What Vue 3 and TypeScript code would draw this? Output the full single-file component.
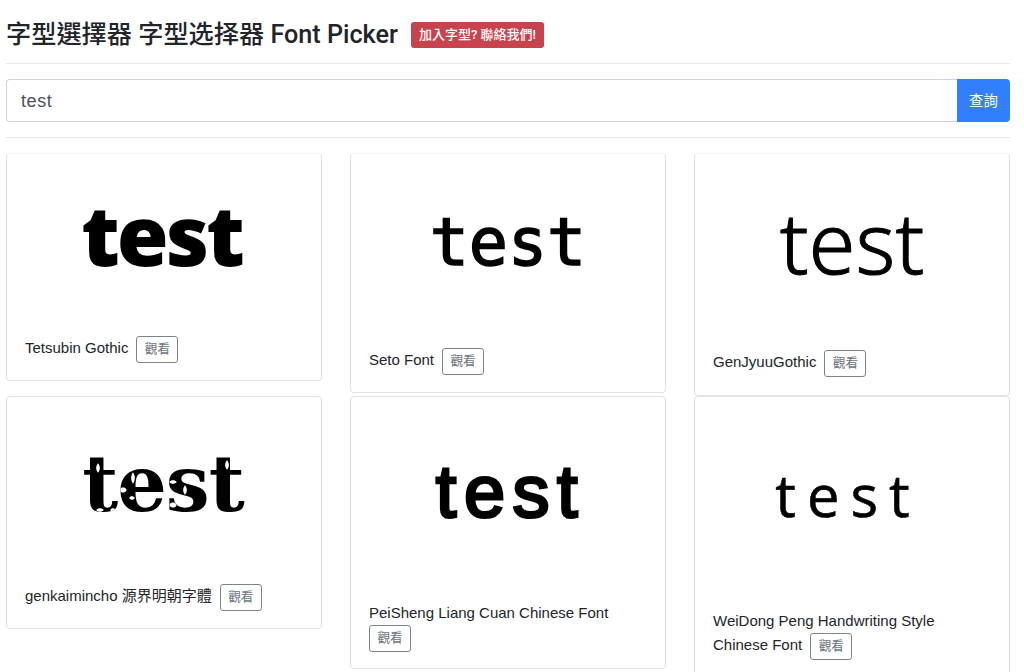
<template>
  <div class="page">
    <h3 class="title">
      <span>字型選擇器 字型选择器 Font Picker</span>
      <a class="badge">加入字型? 聯絡我們!</a>
    </h3>
    <hr class="rule" />

    <div class="search">
      <input v-model="query" class="search-input" type="text" />
      <button class="search-btn">查詢</button>
    </div>
    <hr class="rule rule-low" />

    <div class="columns">
      <div v-for="(column, i) in columns" :key="i" class="column">
        <div
          v-for="font in column"
          :key="font.name"
          class="card"
          :style="{ height: font.height + 'px' }"
        >
          <div class="sample" :class="font.sample" :style="{ height: font.area + 'px' }">
            {{ query }}
          </div>
          <p class="meta">
            <span class="meta-name">{{ font.name }}</span>
            <a class="view-btn">觀看</a>
          </p>
        </div>
      </div>
    </div>
  </div>
</template>

<script setup lang="ts">
import { ref } from 'vue'

interface FontItem {
  name: string
  sample: string
  height: number
  area: number
}

const query = ref('test')

const columns: FontItem[][] = [
  [
    { name: 'Tetsubin Gothic', sample: 'tetsubin', height: 228, area: 182 },
    { name: 'genkaimincho 源界明朝字體', sample: 'genkai', height: 233, area: 187 },
  ],
  [
    { name: 'Seto Font', sample: 'seto', height: 240, area: 194 },
    { name: 'PeiSheng Liang Cuan Chinese Font', sample: 'peisheng', height: 273, area: 204 },
  ],
  [
    { name: 'GenJyuuGothic', sample: 'genjyuu', height: 243, area: 196 },
    { name: 'WeiDong Peng Handwriting Style Chinese Font', sample: 'weidong', height: 290, area: 212 },
  ],
]
</script>

<style>
html,
body {
  margin: 0;
  background: #fff;
  overflow: hidden;
}
</style>

<style scoped>
.page {
  height: 672px;
  padding: 0 14px 0 6px;
  overflow: hidden;
  box-sizing: border-box;
  font-family: 'Liberation Sans', 'Noto Sans CJK TC', sans-serif;
  color: #212529;
}

.title {
  display: flex;
  align-items: center;
  gap: 13px;
  height: 63px;
  margin: 0;
  font-family: Roboto, 'Noto Sans CJK TC', sans-serif;
  font-size: 25.2px;
  font-weight: 500;
  white-space: nowrap;
}

.badge {
  padding: 0 8px;
  height: 26px;
  line-height: 26px;
  margin-top: 7px;
  border-radius: 3px;
  background: #c9434e;
  color: #fff;
  font-size: 13px;
  font-weight: 500;
}

.rule {
  height: 1px;
  margin: 0;
  border: 0;
  background: #e6e6e8;
}

.search {
  display: flex;
  height: 43px;
  margin-top: 15px;
}

.search-input {
  flex: 1;
  min-width: 0;
  padding: 2px 14px 0;
  border: 1px solid #ced4da;
  border-right: 0;
  border-radius: 4px 0 0 4px;
  outline: none;
  color: #495057;
  font-family: inherit;
  font-size: 18px;
  letter-spacing: 0.6px;
}

.search-btn {
  width: 53px;
  padding: 0 0 3px;
  border: 0;
  border-radius: 0 4px 4px 0;
  background: #317ffb;
  color: #fff;
  font-family: inherit;
  font-size: 14.4px;
}

.rule-low {
  margin-top: 15px;
}

.columns {
  display: flex;
  gap: 28px;
  margin-top: 15px;
}

.column {
  flex: 1;
  min-width: 0;
}

.card {
  box-sizing: border-box;
  margin-bottom: 3px;
  padding: 0 18px;
  border: 1px solid #e2e2e4;
  border-top-color: #f6f6f7;
  border-radius: 4px;
  background: #fff;
  overflow: hidden;
}

.column:first-child .card {
  margin-bottom: 15px;
}

.column:last-child .card {
  margin-bottom: 0;
}

.card + .card {
  border-top-color: #e2e2e4;
}

.sample {
  display: flex;
  box-sizing: border-box;
  justify-content: center;
  align-items: center;
  color: #000;
  line-height: 1;
}

.meta {
  margin: 0;
  font-size: 15px;
  line-height: 24px;
}

.meta-name {
  margin-right: 8px;
}

.view-btn {
  display: inline-block;
  box-sizing: border-box;
  width: 42px;
  height: 27px;
  border: 1px solid #7b838a;
  border-radius: 3px;
  color: #6c757d;
  font-size: 12.6px;
  line-height: 25px;
  text-align: center;
  vertical-align: middle;
}

.tetsubin {
  padding: 0 5px 22px 0;
  font-family: 'Open Sans', sans-serif;
  font-size: 84px;
  font-weight: 800;
  letter-spacing: -3px;
}

/* white specks over the letters, the font in the sample is a distressed one */
.genkai {
  padding: 0 2px 13px 0;
  font-family: 'DejaVu Serif', serif;
  font-size: 78px;
  font-weight: 700;
  letter-spacing: -1px;
  color: transparent;
  background:
    radial-gradient(ellipse 2px 5px at 73px 71px, #fff 70%, transparent),
    radial-gradient(ellipse 2px 6px at 108px 81px, #fff 70%, transparent),
    radial-gradient(ellipse 4px 3px at 98px 93px, #fff 70%, transparent),
    radial-gradient(ellipse 3px 2px at 107px 101px, #fff 70%, transparent),
    radial-gradient(ellipse 4px 2px at 148px 85px, #fff 70%, transparent),
    radial-gradient(ellipse 2px 5px at 160px 93px, #fff 70%, transparent),
    radial-gradient(ellipse 4px 3px at 148px 108px, #fff 70%, transparent),
    radial-gradient(ellipse 2px 5px at 202px 68px, #fff 70%, transparent),
    radial-gradient(ellipse 4px 2px at 75px 113px, #fff 70%, transparent),
    radial-gradient(ellipse 3px 2px at 88px 113px, #fff 70%, transparent),
    #000;
  -webkit-background-clip: text;
  background-clip: text;
}

.seto {
  padding-bottom: 17px;
  font-family: 'DejaVu Sans Mono', monospace;
  font-size: 65px;
  -webkit-text-stroke: 1.5px #000;
}

.peisheng {
  padding: 0 0 15px 5px;
  font-family: 'Liberation Sans', sans-serif;
  font-size: 74px;
  letter-spacing: 7.5px;
  -webkit-text-stroke: 3px #000;
}

.genjyuu {
  padding-bottom: 22px;
  font-family: 'Noto Sans', sans-serif;
  font-size: 85px;
  font-weight: 300;
  -webkit-text-stroke: 1px #000;
}

.weidong {
  padding: 0 8px 17px 0;
  font-family: 'Open Sans', sans-serif;
  font-size: 58px;
  letter-spacing: 11px;
  -webkit-text-stroke: 0.6px #000;
}
</style>
